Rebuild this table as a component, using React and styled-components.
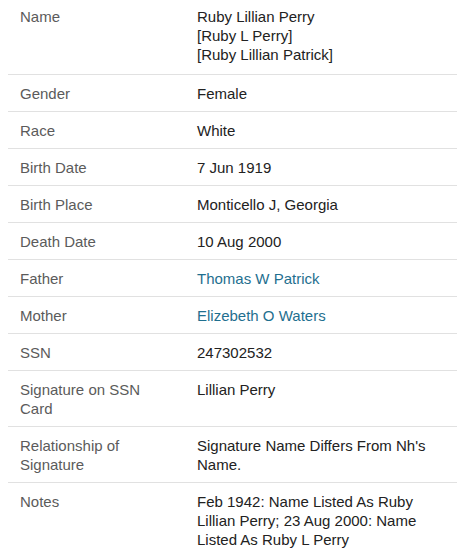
import React from "react"
import styled, { createGlobalStyle } from "styled-components"

const GlobalStyle = createGlobalStyle`
  html, body {
    margin: 0;
    padding: 0;
    background: #fff;
  }
  body {
    font-family: "Liberation Sans", Arial, sans-serif;
  }
`

const Table = styled.dl`
  margin: 0 0 0 8px;
  padding: 0;
`

const Row = styled.div`
  display: grid;
  grid-template-columns: 177px 1fr;
  padding: 9px 8px 8px 12px;
  border-bottom: 1px solid #e1e1e1;
  font-size: 15px;
  line-height: 19px;

  &:first-child {
    padding-top: 7px;
    padding-bottom: 10px;
  }

  &:last-child {
    border-bottom: none;
  }
`

const Label = styled.dt`
  margin: 0;
  padding-right: 30px;
  color: #5b5b5b;
`

const Value = styled.dd`
  margin: 0;
  color: #222;
`

const Line = styled.span`
  display: block;
`

const Link = styled.a`
  color: #1f6f8f;
  text-decoration: none;
`

const records = [
  {
    label: "Name",
    lines: ["Ruby Lillian Perry", "[Ruby L Perry]", "[Ruby Lillian Patrick]"],
  },
  { label: "Gender", value: "Female" },
  { label: "Race", value: "White" },
  { label: "Birth Date", value: "7 Jun 1919" },
  { label: "Birth Place", value: "Monticello J, Georgia" },
  { label: "Death Date", value: "10 Aug 2000" },
  { label: "Father", value: "Thomas W Patrick", link: true },
  { label: "Mother", value: "Elizebeth O Waters", link: true },
  { label: "SSN", value: "247302532" },
  { label: "Signature on SSN Card", value: "Lillian Perry" },
  {
    label: "Relationship of Signature",
    value: "Signature Name Differs From Nh's Name.",
  },
  {
    label: "Notes",
    value:
      "Feb 1942: Name Listed As Ruby Lillian Perry; 23 Aug 2000: Name Listed As Ruby L Perry",
  },
]

const App = () => (
  <>
    <GlobalStyle />
    <Table>
      {records.map(r => (
        <Row key={r.label}>
          <Label>{r.label}</Label>
          <Value>
            {r.lines
              ? r.lines.map(l => <Line key={l}>{l}</Line>)
              : r.link
              ? <Link href="#">{r.value}</Link>
              : r.value}
          </Value>
        </Row>
      ))}
    </Table>
  </>
)

export default App
